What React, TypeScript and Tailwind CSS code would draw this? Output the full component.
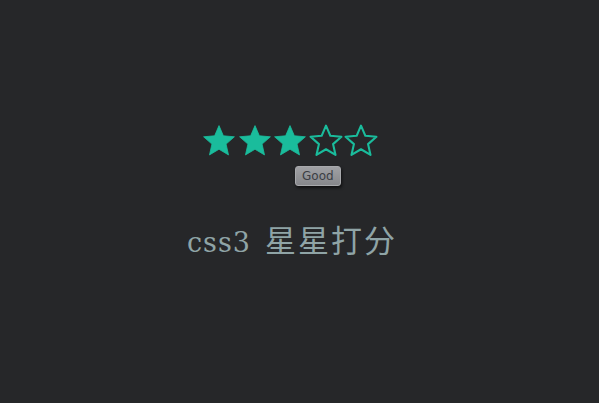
import React from 'react';

const STAR =
  '12,2.3 14.7,8.58 21.51,9.21 16.37,13.72 17.88,20.39 12,16.9 6.12,20.39 7.63,13.72 2.49,9.21 9.3,8.58';

function Star({ filled }: { filled: boolean }) {
  return (
    <svg width="34" height="32.4" viewBox="1.5 1.3 21 20" className="block">
      <polygon
        points={STAR}
        fill={filled ? '#1abc9c' : 'none'}
        stroke="#1abc9c"
        strokeWidth={filled ? 0.5 : 1.3}
        strokeLinejoin="round"
      />
    </svg>
  );
}

export default function App() {
  const rating = 3;
  return (
    <div className="w-[599px] h-[403px] bg-[#262729] overflow-hidden">
      <div className="flex flex-col items-center pt-[124px] pr-[19px]">
        <div className="relative flex gap-[1.5px]">
          {[1, 2, 3, 4, 5].map((i) => (
            <Star key={i} filled={i <= rating} />
          ))}
          <div className="absolute left-[93px] top-[42px] h-[20px] px-[6px] rounded-[3px] border border-[#a8a9ac] bg-gradient-to-b from-[#a0a1a4] to-[#86878b] shadow-[1px_2px_3px_rgba(0,0,0,0.6)] text-[12px] leading-[18px] text-[#3b3e44] font-['DejaVu_Sans',sans-serif]">
            Good
          </div>
        </div>
        <h1 className="mt-[67px] flex items-baseline leading-none text-[#8fa4a6] pl-[4px]">
          <span className="text-[27px] tracking-[1px] font-['DejaVu_Serif',serif]">css3</span>
          <span className="ml-[14px] text-[31px] tracking-[2px] font-['Noto_Sans_CJK_SC',sans-serif]">星星打分</span>
        </h1>
      </div>
    </div>
  );
}
